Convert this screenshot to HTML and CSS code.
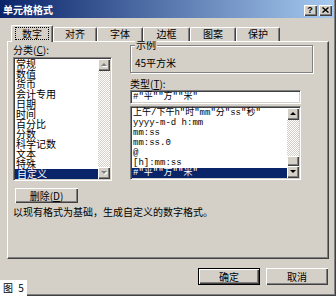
FILE: index.html
```html
<!DOCTYPE html>
<html lang="zh-CN">
<head>
<meta charset="utf-8">
<title>单元格格式</title>
<link rel="stylesheet" href="styles.css">
</head>
<body>
<div class="dialog">
  <div class="titlebar">
    <span class="title">单元格格式</span>
    <div class="cbtns">
      <span class="cbtn q">?</span>
      <span class="cbtn"><svg width="7" height="6" viewBox="0 0 7 6"><path d="M0.5 0.5L6.5 5.5M6.5 0.5L0.5 5.5" stroke="#000" stroke-width="1.4"/></svg></span>
    </div>
  </div>
  <div class="tabs">
    <div class="tab sel w42"><span class="focus">数字</span></div>
    <div class="tab w44">对齐</div>
    <div class="tab w46">字体</div>
    <div class="tab w47">边框</div>
    <div class="tab w46">图案</div>
    <div class="tab w44">保护</div>
  </div>
  <div class="panel">
    <div class="cols">
      <div class="left">
        <div class="lbl">分类(<u>C</u>):</div>
        <div class="list cat">
          <div class="items">
            <div class="item">常规</div>
            <div class="item">数值</div>
            <div class="item">货币</div>
            <div class="item">会计专用</div>
            <div class="item">日期</div>
            <div class="item">时间</div>
            <div class="item">百分比</div>
            <div class="item">分数</div>
            <div class="item">科学记数</div>
            <div class="item">文本</div>
            <div class="item">特殊</div>
            <div class="item on">自定义</div>
          </div>
          <div class="sbar">
            <div class="sbtn"><span class="arr up dis"></span></div>
            <div class="track"></div>
            <div class="sbtn"><span class="arr down dis"></span></div>
          </div>
        </div>
        <div class="btn del">删除(<u>D</u>)</div>
      </div>
      <div class="right">
        <div class="group">
          <div class="legend">示例</div>
          <div class="sample">45平方米</div>
        </div>
        <div class="lbl2">类型(<u>T</u>):</div>
        <div class="textbox">#"平""方""米"</div>
        <div class="list fmt">
          <div class="items">
            <div class="item">上午/下午h"时"mm"分"ss"秒"</div>
            <div class="item">yyyy-m-d h:mm</div>
            <div class="item">mm:ss</div>
            <div class="item">mm:ss.0</div>
            <div class="item">@</div>
            <div class="item">[h]:mm:ss</div>
            <div class="item on">#"平""方""米"</div>
          </div>
          <div class="sbar">
            <div class="sbtn"><span class="arr up"></span></div>
            <div class="track"></div>
            <div class="thumb"></div>
            <div class="sbtn"><span class="arr down"></span></div>
          </div>
        </div>
      </div>
    </div>
    <p class="desc">以现有格式为基础，生成自定义的数字格式。</p>
  </div>
  <div class="actions">
    <div class="btn ok">确定</div>
    <div class="btn">取消</div>
  </div>
  <div class="fig">图 5</div>
</div>
</body>
</html>
```

FILE: styles.css
```css
* { box-sizing: border-box; }
html, body { margin: 0; padding: 0; }
body {
  width: 336px;
  height: 296px;
  overflow: hidden;
  background: #d4d0c8;
  font-family: "Noto Sans CJK SC", sans-serif;
  font-size: 10px;
  color: #000;
}
.dialog {
  position: relative;
  width: 336px;
  height: 296px;
  background: #d4d0c8;
  box-shadow: inset -1px -1px #404040, inset -2px -2px #808080;
  display: flex;
  flex-direction: column;
}
.titlebar {
  height: 18px;
  margin-right: 2px;
  display: flex;
  justify-content: space-between;
  align-items: flex-start;
  padding: 0 2px 0 3px;
  background: linear-gradient(to right, #0a246a, #a6caf0);
}
.title {
  margin-top: 4px;
  line-height: 12px;
  color: #fff;
  font-weight: bold;
}
.cbtns { display: flex; gap: 2px; margin-top: 5px; }
.cbtn {
  width: 13px;
  height: 11px;
  background: #d4d0c8;
  box-shadow: inset 1px 1px #fff, inset -1px -1px #404040, inset -2px -2px #808080;
  display: flex;
  align-items: center;
  justify-content: center;
  padding: 0 1px 1px 0;
}
.cbtn.q { font: bold 9px/9px "Liberation Sans", sans-serif; }
.cbtn svg { display: block; }
.tabs {
  display: flex;
  align-items: flex-end;
  height: 23px;
  padding-left: 11px;
  position: relative;
  z-index: 1;
}
.tab {
  height: 14px;
  line-height: 12px;
  text-align: center;
  background: #d4d0c8;
  border-top: 1px solid #fff;
  border-left: 1px solid #fff;
  border-right: 1px solid #404040;
  box-shadow: inset -1px 0 #808080;
  border-radius: 2px 2px 0 0;
}
.tab.sel {
  height: 17px;
  margin-bottom: -1px;
  padding-top: 1px;
}
.focus {
  display: inline-block;
  border: 1px dotted #000;
  line-height: 11px;
  padding: 0 6px;
}
.w42 { width: 42px; }
.w44 { width: 44px; }
.w46 { width: 46px; }
.w47 { width: 47px; }
.panel {
  margin-left: 7px;
  width: 322px;
  height: 218px;
  border-top: 1px solid #fff;
  border-left: 1px solid #fff;
  border-right: 1px solid #404040;
  border-bottom: 1px solid #404040;
  box-shadow: inset -1px -1px #808080;
  padding-left: 5px;
}
.cols { display: flex; gap: 18px; }
.left {
  width: 99px;
  display: flex;
  flex-direction: column;
  align-items: flex-start;
}
.lbl { margin-top: 1px; line-height: 13px; height: 14px; }
.list {
  display: flex;
  background: #fff;
  border: 1px solid;
  border-color: #808080 #fff #fff #808080;
  padding: 1px;
  box-shadow: inset 1px 1px #404040, inset -1px -1px #d4d0c8;
}
.cat { width: 99px; height: 124px; }
.items { flex: 1; min-width: 0; }
.item { line-height: 10px; height: 10px; padding-left: 1px; white-space: nowrap; }
.item.on { background: #0a246a; color: #fff; }
.cat .item.on { padding-left: 2px; }
.sbar { width: 12px; display: flex; flex-direction: column; }
.sbtn {
  width: 12px;
  height: 12px;
  flex: none;
  background: #d4d0c8;
  box-shadow: inset 1px 1px #fff, inset -1px -1px #404040, inset -2px -2px #808080;
  display: flex;
  align-items: center;
  justify-content: center;
  padding: 0 1px 1px 0;
}
.track {
  flex: 1;
  background: repeating-conic-gradient(#fff 0 25%, #d4d0c8 0 50%) 0 0 / 2px 2px;
}
.thumb {
  height: 10px;
  flex: none;
  background: #d4d0c8;
  box-shadow: inset 1px 1px #fff, inset -1px -1px #404040, inset -2px -2px #808080;
}
.arr { width: 0; height: 0; border-left: 3px solid transparent; border-right: 3px solid transparent; }
.arr.up { border-bottom: 3px solid #000; }
.arr.down { border-top: 3px solid #000; }
.arr.dis { filter: drop-shadow(1px 1px 0 #fff); }
.arr.up.dis { border-bottom-color: #808080; }
.arr.down.dis { border-top-color: #808080; }
.btn {
  height: 17px;
  width: 62px;
  display: flex;
  align-items: center;
  justify-content: center;
  line-height: 12px;
  background: #d4d0c8;
  box-shadow: inset 1px 1px #fff, inset -1px -1px #404040, inset -2px -2px #808080;
}
.del { margin-top: 7px; margin-left: 2px; width: 63px; height: 15px; }
.ok {
  border: 1px solid #000;
}
.right { width: 183px; }
.group {
  margin-top: 3px;
  height: 28px;
  border: 1px solid #808080;
  box-shadow: inset 1px 1px #fff, 1px 1px #fff;
  padding: 0 4px;
}
.legend {
  width: max-content;
  margin-top: -7px;
  line-height: 12px;
  background: #d4d0c8;
  padding: 0 1px;
}
.sample { margin-top: 6px; line-height: 12px; }
.lbl2 { margin-top: 5px; line-height: 12px; }
.textbox {
  width: 171px;
  height: 14px;
  background: #fff;
  border: 1px solid;
  border-color: #808080 #fff #fff #808080;
  box-shadow: inset 1px 1px #404040, inset -1px -1px #d4d0c8;
  padding: 1px 2px;
  line-height: 10px;
  font-family: "Liberation Mono", "Noto Sans CJK SC", monospace;
  font-size: 9px;
  white-space: nowrap;
}
.fmt {
  margin-top: 2px;
  width: 171px;
  height: 74px;
  font-family: "Liberation Mono", "Noto Sans CJK SC", monospace;
  font-size: 9px;
}
.desc { margin: 3px 0 0; line-height: 12px; white-space: nowrap; }
.actions {
  display: flex;
  justify-content: flex-end;
  gap: 6px;
  margin-top: 9px;
  padding-right: 8px;
}
.fig {
  position: absolute;
  left: 0;
  bottom: 0;
  width: 27px;
  height: 16px;
  background: #fff;
  line-height: 16px;
  padding-left: 3px;
  word-spacing: 3px;
  white-space: nowrap;
}
```
